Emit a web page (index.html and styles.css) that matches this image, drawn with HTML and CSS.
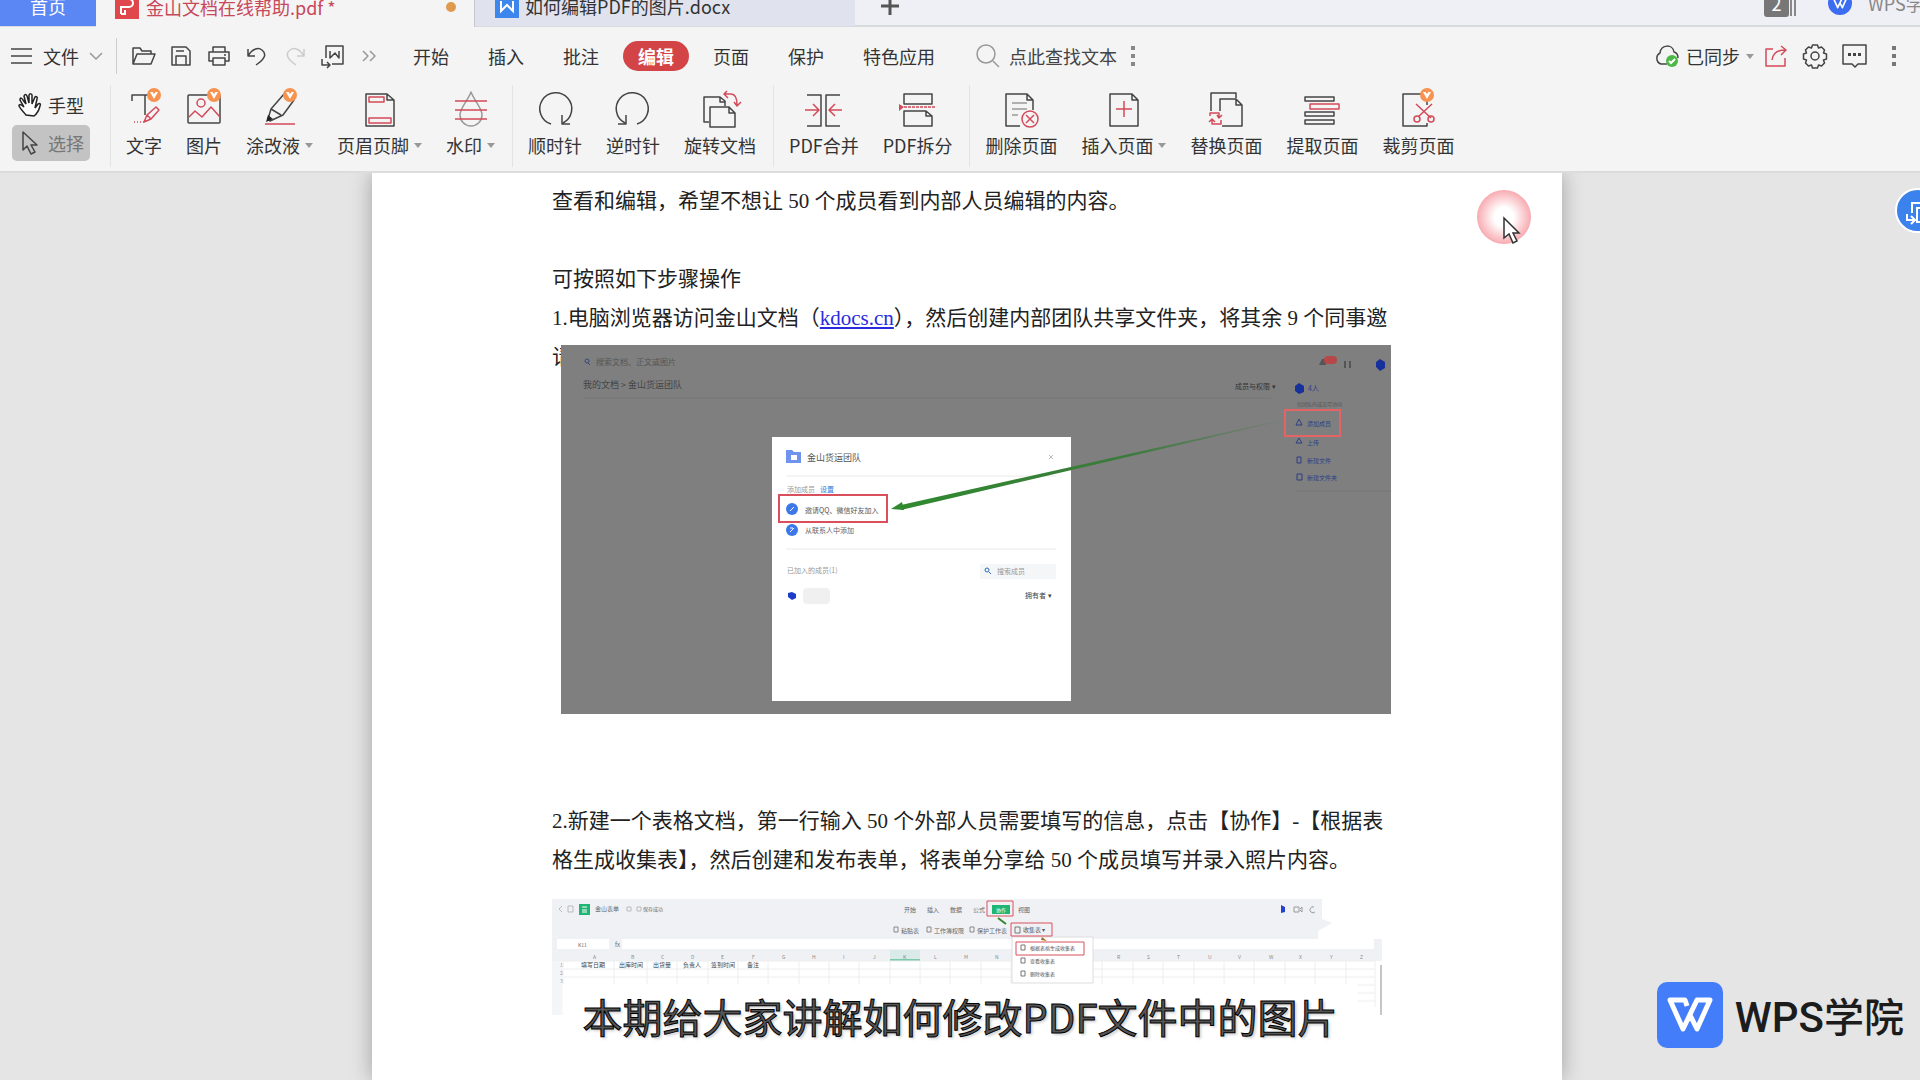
FILE: index.html
```html
<!DOCTYPE html>
<html lang="zh-CN">
<head>
  <meta charset="UTF-8">
  <title>金山文档在线帮助.pdf</title>
  <link rel="stylesheet" href="styles.css">
</head>
<body>

  <svg class="defs" aria-hidden="true">
    <symbol id="vip" viewBox="0 0 14 14">
      <circle cx="7" cy="7" r="7" fill="#f79350"/>
      <path d="M3 4h8L7 11z" fill="#fff"/><path d="M5.500 4h3L7 6z" fill="#f79350"/>
    </symbol>
    <symbol id="wps" viewBox="0 0 46 36">
      <path d="M20 9l-2-6H3l13 29L30 3h13L30 32l-7-14" fill="none" stroke="#fff" stroke-width="5" stroke-linejoin="round"/>
    </symbol>
  </svg>

  <!-- 标签栏 -->
  <nav class="tabbar">
    <button class="tab home">首页</button>
    <button class="tab active">
      <svg class="tab-icon" viewBox="0 0 24 24"><path d="M0 0h24v24H0z" fill="#e0474c"/><path d="M6 19v-7h8a4 4 0 0 0 0-8H7M6 19h4v-4" fill="none" stroke="#fff" stroke-width="2"/></svg>
      <span>金山文档在线帮助.pdf *</span>
      <i class="dot"></i>
    </button>
    <button class="tab doc">
      <svg class="tab-icon" viewBox="0 0 24 24"><path d="M0 0h24v24H0z" fill="#3c86ec"/><path d="M6 7v10l6-6 6 6V7" fill="none" stroke="#fff" stroke-width="2"/></svg>
      <span>如何编辑PDF的图片.docx</span>
    </button>
    <button class="add" aria-label="新建标签">
      <svg width="18" height="18" viewBox="0 0 18 18"><path d="M9 0v18M0 9h18" stroke="#555" stroke-width="3"/></svg>
    </button>
    <div class="account">
      <span class="count">2</span>
      <span class="strips"></span>
      <span class="avatar"><svg width="16" height="12"><use href="#wps"/></svg></span>
      <span>WPS学院</span>
    </div>
  </nav>

  <header class="ribbon">
    <!-- 菜单行 -->
    <div class="menu">
      <button class="file">
        <svg width="22" height="16" viewBox="0 0 22 16"><path d="M0 1h21M0 8h21M0 15h21" class="k"/></svg>
        文件
        <svg width="14" height="9" viewBox="0 0 14 9"><path d="M1 1l6 6 6-6" class="g"/></svg>
      </button>
      <div class="quick">
        <button aria-label="打开"><svg viewBox="0 0 24 24"><path d="M2 20V4h7l2 3h9v3M2 20L6 10h18l-4 10z" class="k"/></svg></button>
        <button aria-label="保存"><svg viewBox="0 0 24 24"><path d="M3 3h14l4 4v14H3zM7 21v-9h10v9M7 7h8" class="k"/></svg></button>
        <button aria-label="打印"><svg viewBox="0 0 24 24"><path d="M6 8V3h12v5M6 17H2V8h20v9h-4M6 14h12v7H6zM17 11h2" class="k"/></svg></button>
        <button aria-label="撤销"><svg viewBox="0 0 24 24"><path d="M3 5v7h7M3 12C7 5 13 3 17 6c5 4 3 9-6 15" class="k"/></svg></button>
        <button aria-label="恢复"><svg viewBox="0 0 24 24"><path d="M21 5v7h-7M21 12C17 5 11 3 7 6c-5 4-3 9 6 15" class="l"/></svg></button>
        <button aria-label="转为Word"><svg viewBox="0 0 24 24"><path d="M5 14V2h17v18H11M9 7v7l5-5 4 5V7M1 15v6h8M6 18l3 3-3 3" class="k"/></svg></button>
        <button aria-label="更多"><svg viewBox="0 0 24 24"><path d="M4 7l5 5-5 5M11 7l5 5-5 5" class="g"/></svg></button>
      </div>
      <nav class="menu-tabs">
        <button>开始</button>
        <button>插入</button>
        <button>批注</button>
        <button class="current">编辑</button>
        <button>页面</button>
        <button>保护</button>
        <button>特色应用</button>
      </nav>
      <label class="search">
        <svg width="24" height="24" viewBox="0 0 24 24"><circle cx="10" cy="10" r="9" class="g"/><path d="M17 17l6 6" class="g"/></svg>
        <input type="text" placeholder="点此查找文本" aria-label="点此查找文本">
      </label>
      <button aria-label="查找选项"><svg width="4" height="20" viewBox="0 0 4 20"><path d="M0 0h4v4H0zM0 8h4v4H0zM0 16h4v4H0z" fill="#888"/></svg></button>
      <div class="menu-right">
        <button class="sync">
          <svg width="26" height="24" viewBox="0 0 26 24"><path d="M13 20H7a6 6 0 0 1-1-11C7 0 19 0 20 8c4 1 4 4 4 6" class="k"/><circle cx="18" cy="17" r="6" fill="#4db848"/><path d="M15 17l2 2 4-4" fill="none" stroke="#fff" stroke-width="2"/></svg>
          已同步
          <i class="caret"></i>
        </button>
        <button aria-label="分享"><svg width="24" height="24" viewBox="0 0 24 24"><path d="M9 5H2v17h19v-8M8 16C9 9 13 6 21 6M17 2l5 4-5 5" class="r"/></svg></button>
        <button aria-label="设置"><svg width="26" height="26" viewBox="0 0 26 26"><path d="M10.500 2h5l1 3 3-1 3 3-1 3 3 1v5l-3 1 1 3-3 3-3-1-1 3h-5l-1-3-3 1-3-3 1-3-3-1v-5l3-1-1-3 3-3 3 1z" class="k"/><circle cx="13" cy="13" r="4" class="k"/></svg></button>
        <button aria-label="反馈"><svg width="26" height="24" viewBox="0 0 26 24"><path d="M1 1h23v19h-8l-3 3-3-3H1z" class="k"/><path d="M6 9h3v3H6zM11 9h3v3h-3zM16 9h3v3h-3z" fill="#444"/></svg></button>
        <button aria-label="更多选项"><svg width="4" height="20" viewBox="0 0 4 20"><path d="M0 0h4v4H0zM0 8h4v4H0zM0 16h4v4H0z" fill="#777"/></svg></button>
      </div>
    </div>

    <!-- 工具行 -->
    <div class="tools">
      <div class="modes">
        <button>
          <svg width="24" height="24" viewBox="0 0 24 24"><path d="M8 22C6 19 3 17 1 13c0-2 2-2 5 1L2 7c0-3 2-2 3 0l3 4-2-8c1-2 2-2 3 0l2 7V2c1-2 3-1 3 0v9l3-7c1-1 3 0 2 2l-2 9 3-4c2-1 3 0 2 2-1 4-2 7-6 10z" fill="#fff" stroke="#222" stroke-width="1.500"/></svg>
          手型
        </button>
        <button class="selected">
          <svg width="24" height="24" viewBox="0 0 24 24"><path d="M5 1v18l4-4 4 8 4-2-4-7h6z" class="k"/></svg>
          选择
        </button>
      </div>

      <div class="group">
        <button>
          <svg viewBox="0 0 36 36"><path d="M6 10V4h19M19 4v20" class="k"/><path d="M18 31l3-7 9-8 3 3-8 9zM21 24l4 4" class="r"/><path d="M8 31h10" class="r" stroke-dasharray="1 2"/><use href="#vip" x="21" y="-3" width="14" height="14"/></svg>
          <span>文字</span>
        </button>
        <button>
          <svg viewBox="0 0 36 36"><rect x="2" y="4" width="32" height="28" rx="1" class="k"/><circle cx="15" cy="12" r="4" class="r"/><path d="M3 26l6-6 7 6 9-10 9 10" class="r"/><use href="#vip" x="21" y="-3" width="14" height="14"/></svg>
          <span>图片</span>
        </button>
        <button>
          <svg viewBox="0 0 36 36"><path d="M6 28l3-10L22 3l10 6-11 15-13 6zM9 18l10 6" class="k"/><path d="M4 31l2-7 5 4z" fill="#222"/><path d="M3 33h30" class="r"/><use href="#vip" x="21" y="-3" width="14" height="14"/></svg>
          <span>涂改液<i class="caret"></i></span>
        </button>
        <button>
          <svg viewBox="0 0 36 36"><path d="M4 3h21l7 6v26H4zM25 3v6h7" class="k"/><path d="M7 6h15v5H7zM7 27h22v5H7z" class="r"/></svg>
          <span>页眉页脚<i class="caret"></i></span>
        </button>
        <button>
          <svg viewBox="0 0 36 36"><path d="M18 1C14 11 7 17 7 24a11 11 0 0 0 22 0C29 17 22 11 18 1z" class="g"/><path d="M2 10h32M2 19h32M2 28h32" class="r"/></svg>
          <span>水印<i class="caret"></i></span>
        </button>
      </div>

      <div class="group">
        <button>
          <svg viewBox="0 0 36 36"><path d="M14 33a16 16 0 1 1 12-1M25 24v9h8" class="k"/></svg>
          <span>顺时针</span>
        </button>
        <button>
          <svg viewBox="0 0 36 36"><path d="M22 33a16 16 0 1 0-12-1M11 24v9H3" class="k"/></svg>
          <span>逆时针</span>
        </button>
        <button>
          <svg viewBox="0 0 36 36"><path d="M7 31H2V6h16l5 4v5M18 6v5h5" class="k"/><path d="M8 16h19l6 6v14H8zM27 16v6h6" class="k"/><path d="M22 3h7c4 0 6 3 6 11M25 0l-3 3 4 4M32 11l3 4 4-4" class="r"/></svg>
          <span>旋转文档</span>
        </button>
      </div>

      <div class="group">
        <button>
          <svg viewBox="0 0 36 36"><path d="M1 4h14v31H1M34 4H20v31h14" class="k"/><path d="M-1 19h13M7 13l6 6-6 6M36 19H23M29 13l-6 6 6 6" class="r"/></svg>
          <span>PDF合并</span>
        </button>
        <button>
          <svg viewBox="0 0 36 36"><path d="M4 3h28v10H4zM4 20h22l6 5v10H4zM26 20v5h6" class="k"/><path d="M4 16h32" class="r" stroke-dasharray="3 1"/><path d="M-1 13v7l5-4z" fill="#d34a5a"/></svg>
          <span>PDF拆分</span>
        </button>
      </div>

      <div class="group">
        <button>
          <svg viewBox="0 0 36 36"><path d="M17 35H3V3h21l6 6v10M24 3v6h6" class="k"/><path d="M9 12h15M9 18h15M9 24h6" class="g"/><circle cx="27" cy="28" r="8" class="r"/><path d="M23 24l8 8M31 24l-8 8" class="r"/></svg>
          <span>删除页面</span>
        </button>
        <button>
          <svg viewBox="0 0 36 36"><path d="M4 3h22l6 6v26H4zM26 3v6h6" class="k"/><path d="M18 10v16M10 18h16" class="r"/></svg>
          <span>插入页面<i class="caret"></i></span>
        </button>
        <button>
          <svg viewBox="0 0 36 36"><path d="M3 20V2h25v5M12 20V8h16l6 6v21H14M28 8v6h6" class="k"/><path d="M2 25v-3h9v4M9 24l2 3 3-3M13 29v4H4v-4M7 31l-3-3-3 3" class="r"/></svg>
          <span>替换页面</span>
        </button>
        <button>
          <svg viewBox="0 0 36 36"><path d="M1 6h29v4H1zM1 21h29v4H1zM1 29h29v4H1z" class="k"/><path d="M6 13h29v5H6z" class="r"/></svg>
          <span>提取页面</span>
        </button>
        <button>
          <svg viewBox="0 0 36 36"><path d="M27 14V3H3v32h24v-3" class="k"/><path d="M16 13l15 14M32 13L18 26" class="r"/><circle cx="17" cy="28" r="3" class="r"/><circle cx="31" cy="28" r="3" class="r"/><use href="#vip" x="20" y="-3" width="14" height="14"/></svg>
          <span>裁剪页面</span>
        </button>
      </div>
    </div>
  </header>

  <!-- 文档区 -->
  <main class="workspace">
    <article class="page">
      <p>查看和编辑，希望不想让 50 个成员看到内部人员编辑的内容。</p>
      <p class="gap">可按照如下步骤操作</p>
      <p>1.电脑浏览器访问金山文档（<a href="#">kdocs.cn</a>），然后创建内部团队共享文件夹，将其余 9 个同事邀请</p>

      <figure class="shot team">
        <svg viewBox="0 0 830 369" role="img" aria-label="邀请团队成员">
          <path d="M0 0h830v369H0z" fill="#7f7f7f"/>
          <circle cx="26" cy="16" r="2" fill="none" stroke="#334a78"/><path d="M27 18l2 2" stroke="#334a78"/>
          <g fill="#555" font-size="8">
            <text x="35" y="20">搜索文档、正文或图片</text>
            <text x="22" y="43" font-size="9" fill="#444">我的文档 &gt; 金山货运团队</text>
            <text x="674" y="44" font-size="7" fill="#333">成员与权限 ▾</text>
            <text x="736" y="61" font-size="5">仅团队内成员可访问</text>
          </g>
          <path d="M22 53h688M736 146h94" stroke="#777"/>
          <path d="M758 20l3-6h4v6zM783 16h2v7h-2zM788 16h2v7h-2z" fill="#555"/>
          <rect x="763" y="11" width="13" height="8" rx="4" fill="#b54848"/>
          <g fill="#16309c"><path d="M819 14l5 3v6l-5 3-4-4v-5zM738 38l5 3v6l-5 2-4-3v-5z"/></g>
          <g fill="#2c3f86" font-size="7">
            <text x="747" y="46">4人</text>
            <text x="746" y="81" font-size="6">添加成员</text>
            <text x="746" y="100" font-size="6">上传</text>
            <text x="746" y="118" font-size="6">新建文件</text>
            <text x="746" y="135" font-size="6">新建文件夹</text>
          </g>
          <path d="M735 80h6l-3-6zM735 98h6l-3-5zM736 112h4v6h-4zM736 129h5v6h-5z" fill="none" stroke="#2c3f86"/>
          <rect x="724" y="65" width="55" height="26" fill="none" stroke="#e26464" stroke-width="2"/>

          <path d="M211 92h299v264H211z" fill="#fff"/>
          <path d="M225 105h6l2 2h7v11h-15z" fill="#6f94ee"/><path d="M230 110h6v5h-6z" fill="#fff"/>
          <text x="246" y="116" font-size="9" fill="#555">金山货运团队</text>
          <path d="M488 110l4 4M492 110l-4 4" stroke="#bbb"/>
          <path d="M225 131h270M225 204h270" stroke="#eaeaea"/>
          <g font-size="7">
            <text x="226" y="147" fill="#999">添加成员</text>
            <text x="259" y="147" fill="#2c7be0">设置</text>
            <text x="244" y="168" fill="#555">邀请QQ、微信好友加入</text>
            <text x="244" y="188" fill="#666">从联系人中添加</text>
            <text x="226" y="228" fill="#999">已加入的成员(1)</text>
          </g>
          <circle cx="231" cy="164" r="6" fill="#3c78e8"/><circle cx="231" cy="185" r="6" fill="#3c78e8"/>
          <path d="M229 166l4-4M229 187l4-4M229 183h3" stroke="#fff"/>
          <rect x="218" y="150" width="108" height="27" fill="none" stroke="#d9505c" stroke-width="2"/>
          <path d="M419 219h76v15h-76z" fill="#f5f6f8"/>
          <circle cx="426" cy="225" r="2" fill="none" stroke="#2c6ab8"/><path d="M428 227l2 2" stroke="#2c6ab8"/>
          <text x="436" y="229" font-size="7" fill="#999">搜索成员</text>
          <path d="M231 247l4 2v4l-4 2-4-3v-4z" fill="#1c3cc8"/>
          <rect x="242" y="243" width="27" height="16" rx="4" fill="#f0f0f0"/>
          <text x="464" y="253" font-size="7" fill="#444">拥有者 ▾</text>

          <linearGradient id="fade" gradientUnits="userSpaceOnUse" x1="340" y1="0" x2="716" y2="0">
            <stop offset="0" stop-color="#2f8a2f"/><stop offset=".6" stop-color="#3c7a3c"/><stop offset="1" stop-color="#3c7a3c" stop-opacity=".1"/>
          </linearGradient>
          <path d="M340 160L716 76v1L340 165z" fill="url(#fade)"/>
          <path d="M330 164l11-7 2 8z" fill="#2f8a2f"/>
        </svg>
      </figure>

      <p>2.新建一个表格文档，第一行输入 50 个外部人员需要填写的信息，点击【协作】-【根据表格生成收集表】，然后创建和发布表单，将表单分享给 50 个成员填写并录入照片内容。</p>

      <figure class="shot sheet">
        <svg viewBox="0 0 830 116" role="img" aria-label="根据表格生成收集表">
          <path d="M0 0h770v20l10 4-14 8v8h64v22H0z" fill="#f0f1f5"/>
          <path d="M5 40h52v10H5zM70 40h752v10H70z" fill="#fff"/>
          <path d="M0 62h12v54H0z" fill="#f4f5f7"/>
          <path d="M27 5h11v11H27z" fill="#1fb573"/><path d="M30 8h5M30 11h5M30 13h5" stroke="#fff"/>
          <path d="M10 7l-3 3 3 3M16 7h5v6h-5zM75 8h4v4h-4zM85 8h4v4h-4z" fill="none" stroke="#bbb"/>
          <g font-size="6" fill="#666">
            <text x="43" y="12">金山表单</text><text x="91" y="12" font-size="5">保存成功</text>
            <text x="352" y="13">开始</text><text x="375" y="13">插入</text><text x="398" y="13">数据</text>
            <text x="421" y="13">公式</text><text x="466" y="13">视图</text>
            <text x="349" y="34">粘贴表</text><text x="382" y="34">工作簿权限</text>
            <text x="425" y="34">保护工作表</text>
            <text x="26" y="48" font-size="5">K11</text><text x="63" y="48">fx</text>
          </g>
          <path d="M342 28h4v5h-4zM375 28h4v5h-4zM418 28h4v5h-4z" fill="none" stroke="#888"/>
          <path d="M440 6h18v9h-18z" fill="#1fb573"/><text x="444" y="13" font-size="5" fill="#fff">协作</text>
          <path d="M729 6l4 2v5l-4 1z" fill="#2444d0"/>
          <path d="M742 8h5v5h-5zM748 10l2-2v5l-2-2M762 8a3 3 0 1 0 1 5" fill="none" stroke="#999"/>
          <text y="60" font-size="5" fill="#888" x="41 79 109 139 169 200 230 260 291 321 351 382 412 443 473 504 534 565 595 625 656 686 717 747 778 808">ABCDEFGHIJKLMNOPQRSTUVWXYZ</text>
          <path d="M338 51h30v9h-30z" fill="#1fb573" fill-opacity=".1"/><path d="M338 60h30v2h-30z" fill="#7cc9a8"/>
          <path d="M12 62h811M12 70h811M12 78h811M12 86h811M12 94h811M12 102h811M62 62v46M95 62v46M125 62v46M156 62v46M186 62v46M216 62v46M247 62v46M277 62v46M307 62v46M338 62v46M368 62v46M398 62v46M429 62v46M459 62v46M490 62v46M520 62v46M550 62v46M581 62v46M611 62v46M642 62v46M672 62v46M702 62v46M733 62v46M763 62v46M794 62v46M823 62v46" stroke="#eee"/>
          <path d="M829 66v50" stroke="#c4c6ca" stroke-width="2"/>
          <g font-size="6" fill="#444">
            <text x="29" y="68">填写日期</text><text x="67" y="68">出库时间</text><text x="101" y="68">出货量</text>
            <text x="131" y="68">负责人</text><text x="159" y="68">签到时间</text><text x="195" y="68">备注</text>
          </g>
          <g font-size="5" fill="#999"><text x="8" y="68">1</text><text x="8" y="76">2</text><text x="8" y="84">3</text></g>
          <path d="M460 38h81v46h-81z" fill="#fff" stroke="#ddd"/>
          <g font-size="6" fill="#555">
            <text x="471" y="33">收集表 ▾</text>
            <text x="478" y="51" font-size="5">根据表格生成收集表</text>
            <text x="478" y="64" font-size="5">查看收集表</text><text x="478" y="77" font-size="5">删除收集表</text>
          </g>
          <path d="M463 28h5v6h-5zM469 46h4v5h-4zM469 59h4v5h-4zM469 72h4v5h-4z" fill="none" stroke="#777"/>
          <path d="M435 2h26v15h-26zM459 24h41v13h-41zM464 43h68v13h-68z" fill="none" stroke="#d9505c"/>
          <path d="M446 19l8 6" stroke="#2f8a2f" stroke-width="2"/><path d="M490 38l5 4-6-1z" fill="#a0702c"/>
        </svg>
      </figure>
    </article>

    <button class="convert" aria-label="转换">
      <svg width="30" height="30" viewBox="0 0 30 30"><path d="M9 17V7h14v4M14 12h14v14H14zM18 16v7h6M4 18v6h7M8 20l4 4-4 4" fill="none" stroke="#fff" stroke-width="2"/></svg>
    </button>
    <div class="click"></div>
    <svg class="pointer" width="18" height="28" viewBox="0 0 18 28"><path d="M1 1v20l5-4 4 9 4-2-4-8h6z" fill="#fff" stroke="#333" stroke-width="1.500"/></svg>
  </main>

  <div class="caption">本期给大家讲解如何修改PDF文件中的图片</div>

  <div class="brand">
    <span class="brand-logo"><svg width="46" height="36"><use href="#wps"/></svg></span>
    <span>WPS<b>学院</b></span>
  </div>

</body>
</html>
```
FILE: styles.css
```css
* {
  box-sizing: border-box;
}

body {
  margin: 0;
  height: 100vh;
  display: flex;
  flex-direction: column;
  position: relative;
  overflow: hidden;
  background: #e5e5e5;
  color: #333;
  font-family: "Noto Sans CJK SC", sans-serif;
  font-size: 18px;
}

button {
  display: flex;
  align-items: center;
  margin: 0;
  padding: 0;
  border: none;
  background: none;
  color: inherit;
  font: inherit;
  line-height: 24px;
  white-space: nowrap;
  cursor: pointer;
}

svg {
  display: block;
  overflow: visible;
  flex-shrink: 0;
}

.defs {
  position: absolute;
  width: 0;
  height: 0;
}

/* 图标描边颜色 */
.k, .g, .l, .r {
  fill: none;
  stroke: #444;
  stroke-width: 1.5;
  stroke-linejoin: round;
}

.g { stroke: #999; }
.l { stroke: #ccc; }
.r { stroke: #d34a5a; }

.caret {
  border: 4px solid transparent;
  border-top: 5px solid #999;
  border-bottom: none;
}

/* 标签栏 */
.tabbar {
  display: flex;
  height: 27px;
  background: #eff0f5;
  border-bottom: 2px solid #d9dade;
}

.tab {
  height: 26px;
  padding-bottom: 14px;
}

.home {
  width: 96px;
  justify-content: center;
  background: #5b87f5;
  color: #fff;
}

.tab.active {
  width: 379px;
  height: 27px;
  gap: 7px;
  padding-left: 19px;
  padding-right: 18px;
  background: #f4f4f4;
  border-right: 1px solid #c4c8d0;
  color: #c8485a;
}

.dot {
  width: 10px;
  height: 10px;
  margin-left: auto;
  border-radius: 50%;
  background: #e09a50;
}

.doc {
  width: 380px;
  gap: 6px;
  padding-left: 20px;
  background: #e0e3ee;
}

.tab-icon {
  width: 24px;
  height: 24px;
}

.add {
  padding: 0 26px 13px;
}

.account {
  display: flex;
  align-items: center;
  width: 156px;
  height: 26px;
  margin-left: auto;
  padding-bottom: 20px;
  overflow: hidden;
  white-space: nowrap;
  color: #888;
}

.account > * {
  flex-shrink: 0;
}

.count {
  width: 25px;
  background: #777;
  border-radius: 3px;
  color: #fff;
  text-align: center;
  line-height: 28px;
}

.strips {
  width: 6px;
  height: 26px;
  border: solid #888;
  border-width: 0 2px;
  margin: 0 32px 0 1px;
}

.avatar {
  display: flex;
  align-items: center;
  justify-content: center;
  width: 24px;
  height: 24px;
  margin-right: 16px;
  border-radius: 50%;
  background: #3c6cf0;
}

/* 功能区 */
.ribbon {
  background: #f4f4f4;
  border-bottom: 2px solid #dcdcdc;
}

.menu {
  display: flex;
  align-items: center;
  height: 58px;
  padding: 0 24px 0 11px;
}

.file {
  gap: 10px;
  height: 36px;
  padding-right: 13px;
  border-right: 1px solid #ccc;
}

.quick {
  display: flex;
  gap: 14px;
  padding: 0 15px 0 14px;
}

.quick svg {
  width: 24px;
  height: 24px;
}

.menu-tabs {
  display: flex;
  gap: 9px;
}

.menu-tabs button {
  height: 30px;
  padding: 0 15px;
  border-radius: 15px;
}

.menu-tabs .current {
  background: #d24446;
  color: #fff;
  font-weight: bold;
}

.search {
  display: flex;
  align-items: center;
  gap: 9px;
  margin-left: 26px;
}

.search input {
  width: 122px;
  padding: 0;
  border: none;
  outline: none;
  background: none;
  color: #333;
  font: inherit;
}

.search input::placeholder {
  color: #444;
}

.menu-right {
  display: flex;
  align-items: center;
  gap: 14px;
  margin-left: auto;
}

.menu-right button:last-child {
  margin-left: 10px;
}

.sync {
  gap: 6px;
}

.sync + button {
  margin-left: -4px;
}

.tools {
  display: flex;
  height: 86px;
  padding-bottom: 4px;
}

.modes {
  display: flex;
  flex-direction: column;
  gap: 2px;
  width: 110px;
  padding: 2px 20px 0 12px;
}

.modes button {
  gap: 6px;
  height: 36px;
  padding: 0 6px;
  border-radius: 5px;
}

.modes .selected {
  background: #c3c3c3;
  color: #777;
}

.group {
  display: flex;
  gap: 24px;
  padding: 6px 17px 0 15px;
  border-left: 1px solid #e4e4e4;
}

.group button {
  flex-direction: column;
  gap: 6px;
}

.group button svg {
  width: 36px;
  height: 36px;
}

.group button span {
  display: flex;
  align-items: center;
}

.group .caret {
  margin-left: 5px;
}

/* 文档 */
.workspace {
  flex: 1;
  position: relative;
  min-height: 0;
  padding: 0 358px 0 372px;
  overflow: hidden;
}

.page {
  min-height: 100%;
  padding: 9px 174px 60px 180px;
  background: #fff;
  box-shadow: 0 0 20px rgba(0, 0, 0, 0.3);
  color: #222;
  font-family: "Liberation Serif", "Noto Sans CJK SC", serif;
  font-size: 21px;
  line-height: 39px;
}

.page p {
  margin: 0;
}

.page .gap {
  margin-top: 39px;
}

.page a {
  color: #2a2ae0;
}

.shot svg {
  width: 100%;
  height: auto;
  font-family: "Noto Sans CJK SC", sans-serif;
}

/* 图片压住上一段的末行 */
.team {
  position: relative;
  margin: -32px -3px 88px 9px;
}

.sheet {
  margin: 19px 6px 0 0;
}

.convert {
  position: absolute;
  top: 15px;
  right: -20px;
  width: 45px;
  height: 45px;
  justify-content: center;
  border: 2px solid #fff;
  border-radius: 50%;
  background: #3c82ec;
}

.click {
  position: absolute;
  top: 17px;
  right: 389px;
  width: 54px;
  height: 54px;
  border-radius: 50%;
  background: radial-gradient(circle, #fff 25%, #f7a8ae 72%);
}

.pointer {
  position: absolute;
  top: 44px;
  right: 399px;
}

/* 字幕 */
.caption {
  position: absolute;
  left: 50%;
  bottom: 32px;
  transform: translateX(-50%);
  padding: 0 20px;
  background: #fff;
  color: #555;
  font-size: 40px;
  line-height: 64px;
  white-space: nowrap;
  -webkit-text-stroke: 1px #000;
  text-shadow: 2px 2px 3px rgba(0, 0, 0, 0.2);
}

.brand {
  position: absolute;
  right: 16px;
  bottom: 32px;
  display: flex;
  align-items: center;
  gap: 12px;
  color: #1c1c1c;
  font-family: Roboto, "Noto Sans CJK SC", sans-serif;
  font-size: 42px;
  font-weight: 500;
}

.brand b {
  font-size: 40px;
  font-weight: 500;
}

.brand-logo {
  display: flex;
  align-items: center;
  justify-content: center;
  width: 66px;
  height: 66px;
  border-radius: 10px;
  background: #437dfa;
}
```
